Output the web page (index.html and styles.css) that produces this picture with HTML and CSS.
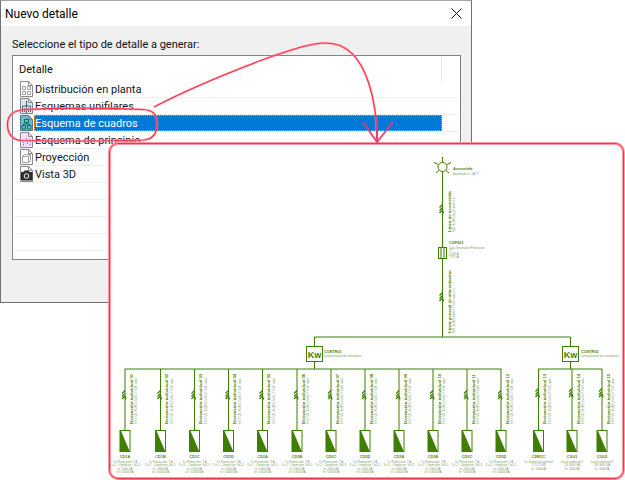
FILE: index.html
```html
<!DOCTYPE html>
<html lang="es">
<head>
<meta charset="utf-8">
<title>Nuevo detalle</title>
<link rel="stylesheet" href="styles.css">
</head>
<body>
<section class="dialog">
  <header class="titlebar">
    <span>Nuevo detalle</span>
    <svg class="close" width="11" height="11" viewBox="0 0 11 11"><path d="M.5.5l10 10M10.500.5l-10 10"/></svg>
  </header>
  <div class="dialog-body">
    <p class="prompt">Seleccione el tipo de detalle a generar:</p>
    <div class="list">
      <div class="list-head"><span>Detalle</span></div>
      <div class="row">
        <svg class="ico" viewBox="0 0 15 16"><path class="doc" d="M1.500.5h8l4 4v11h-12z"/><path class="fold" d="M9.500.5v4h4"/><path class="gr" d="M3.500 5.500h3v3h-3zM8.500 5.500h3v3h-3zM3.500 10.500h3v3h-3zM8.500 10.500h3v3h-3z"/></svg>
        <span class="name">Distribución en planta</span>
      </div>
      <div class="row">
        <svg class="ico" viewBox="0 0 15 16"><path class="doc blue" d="M1.500.5h8l4 4v11h-12z"/><path class="fold" d="M9.500.5v4h4"/><path class="ln" d="M7.500 3v12M3.500 8h8M3.500 8v6M11.500 8v6M5.500 10v4M9.500 10v4"/></svg>
        <span class="name">Esquemas unifilares</span>
      </div>
      <div class="row">
        <svg class="ico" viewBox="0 0 15 16"><path class="doc teal" d="M1.500.5h8l4 4v11h-12z"/><path class="fold" d="M9.500.5v4h4"/><path class="tl" d="M5.500 4.500h4v3h-4zM3 10.500h3.500v3.500H3zM8.500 10.500H12v3.500H8.500zM7.500 7.500v1.500M4.500 10.500V9h6v1.500"/></svg>
        <span class="name sel">Esquema de cuadros</span>
      </div>
      <div class="row">
        <svg class="ico" viewBox="0 0 15 16"><path class="doc pink" d="M1.500.5h8l4 4v11h-12z"/><path class="fold" d="M9.500.5v4h4"/><path class="dots" d="M4 10h2M7 7h2M10 8h2M4 12.500h2M8 11h2M10.500 12.500h2"/></svg>
        <span class="name">Esquema de principio</span>
      </div>
      <div class="row">
        <svg class="ico" viewBox="0 0 15 16"><path class="doc" d="M1.500.5h8l4 4v11h-12z"/><path class="fold" d="M9.500.5v4h4"/><path class="gr" d="M3.500 7.500h6v6h-6zM3.500 7.500l2-2h6v6l-2 2M9.500 7.500l2-2"/></svg>
        <span class="name">Proyección</span>
      </div>
      <div class="row">
        <svg class="ico" viewBox="0 0 15 16"><path class="doc" d="M1.500.5h8l4 4v11h-12z"/><path class="fold" d="M9.500.5v4h4"/><path class="cam" d="M2.500 6.500h2l1-1.500h4l1 1.500h2.500v7.500H2.500z"/><circle class="lens" cx="7.500" cy="10" r="2.300"/></svg>
        <span class="name">Vista 3D</span>
      </div>
      <div class="row"></div>
      <div class="row"></div>
      <div class="row"></div>
      <div class="row"></div>
    </div>
  </div>
</section>

<aside class="panel">
  <svg class="diagram" width="513" height="334" viewBox="110 144 513 334">
    <defs>
      <path id="sw" class="swm" d="M-3-1.500L0-4.500M-3 1.500L0-1.500M-3 4L0 1M0 1l1 3.500"/>
      <g id="box">
        <rect class="bx" x="-5" y="430.500" width="10" height="21"/>
        <path class="tri" d="M-5 431l1 0 9 21H-5z"/>
      </g>
    </defs>

    <path class="w" d="M442.500 157V337M314.500 337H570.500M314.500 337v9M570.500 337v9M314.500 362v7M570.500 362v7M125 369H501.500M538 369H602"/>

    <circle class="hollow" cx="442.500" cy="167" r="4.500"/>
    <path class="w" d="M434 162.500l4 2M451 162.500l-4 2M436 173l3-2.500M449 173l-3-2.500"/>
    <text class="cap" x="453" y="170">Acometida</text>
    <text class="sm" x="453" y="175">Acometida 0.. 5A TT</text>

    <use href="#sw" x="442.500" y="209"/>
    <text class="vt" transform="translate(451 232) rotate(-90)">Línea de acometida</text>
    <text class="vs" transform="translate(455 232) rotate(-90)">RZ1-K (AS) 4x16 mm² Cu</text>

    <rect class="fuse" x="438.500" y="247.500" width="8" height="11"/>
    <path class="w" d="M441 248v10M444 248v10"/>
    <text class="cap" x="449" y="244">CGP001</text>
    <text class="sm" x="449" y="249">Caja General de Protección</text>
    <text class="sm" x="449" y="252">TT</text>
    <text class="sm" x="449" y="255">C&lt;63 A</text>
    <text class="sm" x="449" y="258">*375 kA</text>

    <use href="#sw" x="442.500" y="297"/>
    <text class="vt" transform="translate(451 333) rotate(-90)">Línea general de alimentación</text>
    <text class="vs" transform="translate(455 333) rotate(-90)">RZ1-K (AS) 4x35+TTx16 mm² Cu</text>

    <rect class="kw" x="306.500" y="346.500" width="16" height="15"/>
    <text class="kwt" x="314.500" y="357.500">Kw</text>
    <text class="cap" x="324" y="353">CONTR01</text>
    <text class="sm" x="324" y="357">Centralización de contadores</text>
    <rect class="kw" x="562.500" y="346.500" width="16" height="15"/>
    <text class="kwt" x="570.500" y="357.500">Kw</text>
    <text class="cap" x="581" y="353">CONTR02</text>
    <text class="sm" x="581" y="357">Centralización de contadores</text>

    <g transform="translate(125)"><path class="w" d="M0 369v61"/><use href="#sw" y="395"/><use href="#box"/><text class="vt" transform="translate(7.500 424) rotate(-90)">Derivación individual 01</text><text class="vs" transform="translate(12 424) rotate(-90)">ES 07Z1-K (AS) 2x10+TTx10 mm²</text><text class="capm" y="458">CD1A</text><text class="smm" y="463">2 x Protección: 7 A</text><text class="smm" y="466">3 x 1 - Conductor: 3x1.5</text><text class="smm" y="470">In: 2300 VA</text><text class="smm" y="473">Ict: 1000/5VA</text></g>
    <g transform="translate(160.500)"><path class="w" d="M0 369v61"/><use href="#sw" y="395"/><use href="#box"/><text class="vt" transform="translate(7.500 424) rotate(-90)">Derivación individual 02</text><text class="vs" transform="translate(12 424) rotate(-90)">ES 07Z1-K (AS) 2x10+TTx10 mm²</text><text class="capm" y="458">CD1B</text><text class="smm" y="463">2 x Protección: 7 A</text><text class="smm" y="466">3 x 1 - Conductor: 3x1.5</text><text class="smm" y="470">In: 2300 VA</text><text class="smm" y="473">Ict: 1000/5VA</text></g>
    <g transform="translate(194.500)"><path class="w" d="M0 369v61"/><use href="#sw" y="395"/><use href="#box"/><text class="vt" transform="translate(7.500 424) rotate(-90)">Derivación individual 03</text><text class="vs" transform="translate(12 424) rotate(-90)">ES 07Z1-K (AS) 2x10+TTx10 mm²</text><text class="capm" y="458">CD1C</text><text class="smm" y="463">2 x Protección: 7 A</text><text class="smm" y="466">3 x 1 - Conductor: 3x1.5</text><text class="smm" y="470">In: 2300 VA</text><text class="smm" y="473">Ict: 1000/5VA</text></g>
    <g transform="translate(228.500)"><path class="w" d="M0 369v61"/><use href="#sw" y="395"/><use href="#box"/><text class="vt" transform="translate(7.500 424) rotate(-90)">Derivación individual 04</text><text class="vs" transform="translate(12 424) rotate(-90)">ES 07Z1-K (AS) 2x10+TTx10 mm²</text><text class="capm" y="458">CD1D</text><text class="smm" y="463">2 x Protección: 7 A</text><text class="smm" y="466">3 x 1 - Conductor: 3x1.5</text><text class="smm" y="470">In: 2300 VA</text><text class="smm" y="473">Ict: 1000/5VA</text></g>
    <g transform="translate(262.500)"><path class="w" d="M0 369v61"/><use href="#sw" y="395"/><use href="#box"/><text class="vt" transform="translate(7.500 424) rotate(-90)">Derivación individual 05</text><text class="vs" transform="translate(12 424) rotate(-90)">ES 07Z1-K (AS) 2x10+TTx10 mm²</text><text class="capm" y="458">CD2A</text><text class="smm" y="463">2 x Protección: 7 A</text><text class="smm" y="466">3 x 1 - Conductor: 3x1.5</text><text class="smm" y="470">In: 2300 VA</text><text class="smm" y="473">Ict: 1000/5VA</text></g>
    <g transform="translate(297)"><path class="w" d="M0 369v61"/><use href="#sw" y="395"/><use href="#box"/><text class="vt" transform="translate(7.500 424) rotate(-90)">Derivación individual 06</text><text class="vs" transform="translate(12 424) rotate(-90)">ES 07Z1-K (AS) 2x10+TTx10 mm²</text><text class="capm" y="458">CD2B</text><text class="smm" y="463">2 x Protección: 7 A</text><text class="smm" y="466">3 x 1 - Conductor: 3x1.5</text><text class="smm" y="470">In: 2300 VA</text><text class="smm" y="473">Ict: 1000/5VA</text></g>
    <g transform="translate(331)"><path class="w" d="M0 369v61"/><use href="#sw" y="395"/><use href="#box"/><text class="vt" transform="translate(7.500 424) rotate(-90)">Derivación individual 07</text><text class="vs" transform="translate(12 424) rotate(-90)">ES 07Z1-K (AS) 2x10+TTx10 mm²</text><text class="capm" y="458">CD2C</text><text class="smm" y="463">2 x Protección: 7 A</text><text class="smm" y="466">3 x 1 - Conductor: 3x1.5</text><text class="smm" y="470">In: 2300 VA</text><text class="smm" y="473">Ict: 1000/5VA</text></g>
    <g transform="translate(365)"><path class="w" d="M0 369v61"/><use href="#sw" y="395"/><use href="#box"/><text class="vt" transform="translate(7.500 424) rotate(-90)">Derivación individual 08</text><text class="vs" transform="translate(12 424) rotate(-90)">ES 07Z1-K (AS) 2x10+TTx10 mm²</text><text class="capm" y="458">CD2D</text><text class="smm" y="463">2 x Protección: 7 A</text><text class="smm" y="466">3 x 1 - Conductor: 3x1.5</text><text class="smm" y="470">In: 2300 VA</text><text class="smm" y="473">Ict: 1000/5VA</text></g>
    <g transform="translate(399)"><path class="w" d="M0 369v61"/><use href="#sw" y="395"/><use href="#box"/><text class="vt" transform="translate(7.500 424) rotate(-90)">Derivación individual 09</text><text class="vs" transform="translate(12 424) rotate(-90)">ES 07Z1-K (AS) 2x10+TTx10 mm²</text><text class="capm" y="458">CD3A</text><text class="smm" y="463">2 x Protección: 7 A</text><text class="smm" y="466">3 x 1 - Conductor: 3x1.5</text><text class="smm" y="470">In: 2300 VA</text><text class="smm" y="473">Ict: 1000/5VA</text></g>
    <g transform="translate(433)"><path class="w" d="M0 369v61"/><use href="#sw" y="395"/><use href="#box"/><text class="vt" transform="translate(7.500 424) rotate(-90)">Derivación individual 10</text><text class="vs" transform="translate(12 424) rotate(-90)">ES 07Z1-K (AS) 2x10+TTx10 mm²</text><text class="capm" y="458">CD3B</text><text class="smm" y="463">2 x Protección: 7 A</text><text class="smm" y="466">3 x 1 - Conductor: 3x1.5</text><text class="smm" y="470">In: 2300 VA</text><text class="smm" y="473">Ict: 1000/5VA</text></g>
    <g transform="translate(467)"><path class="w" d="M0 369v61"/><use href="#sw" y="395"/><use href="#box"/><text class="vt" transform="translate(7.500 424) rotate(-90)">Derivación individual 11</text><text class="vs" transform="translate(12 424) rotate(-90)">ES 07Z1-K (AS) 2x10+TTx10 mm²</text><text class="capm" y="458">CD3C</text><text class="smm" y="463">2 x Protección: 7 A</text><text class="smm" y="466">3 x 1 - Conductor: 3x1.5</text><text class="smm" y="470">In: 2300 VA</text><text class="smm" y="473">Ict: 1000/5VA</text></g>
    <g transform="translate(501)"><path class="w" d="M0 369v61"/><use href="#sw" y="395"/><use href="#box"/><text class="vt" transform="translate(7.500 424) rotate(-90)">Derivación individual 12</text><text class="vs" transform="translate(12 424) rotate(-90)">ES 07Z1-K (AS) 2x10+TTx10 mm²</text><text class="capm" y="458">CD3D</text><text class="smm" y="463">2 x Protección: 7 A</text><text class="smm" y="466">3 x 1 - Conductor: 3x1.5</text><text class="smm" y="470">In: 2300 VA</text><text class="smm" y="473">Ict: 1000/5VA</text></g>

    <g transform="translate(538.500)"><path class="w" d="M0 369v61"/><use href="#sw" y="393"/><use href="#box"/><text class="vt" transform="translate(7.500 424) rotate(-90)">Derivación individual 13</text><text class="vs" transform="translate(12 424) rotate(-90)">ES 07Z1-K (AS) 2x16+TTx16 mm²</text><text class="capm" y="458">CDRCC</text><text class="smm" y="463">3 x Instalación general</text><text class="smm" y="466">1* 5.75 kW</text><text class="smm" y="470">Ict: 5000VA</text></g>
    <g transform="translate(572)"><path class="w" d="M0 369v61"/><use href="#sw" y="393"/><use href="#box"/><text class="vt" transform="translate(7.500 424) rotate(-90)">Derivación individual 14</text><text class="vs" transform="translate(12 424) rotate(-90)">ES 07Z1-K (AS) 2x16+TTx16 mm²</text><text class="capm" y="458">CGU1</text><text class="smm" y="463">Local comercial 1</text><text class="smm" y="466">2.8 3000 VA</text><text class="smm" y="470">Ict: 3000VA</text></g>
    <g transform="translate(602)"><path class="w" d="M0 369v61"/><use href="#sw" y="393"/><use href="#box"/><text class="vt" transform="translate(7.500 424) rotate(-90)">Derivación individual 15</text><text class="vs" transform="translate(12 424) rotate(-90)">ES 07Z1-K (AS) 2x16+TTx16 mm²</text><text class="capm" y="458">CGU2</text><text class="smm" y="463">Local comercial 2</text><text class="smm" y="466">2.8 3000 VA</text><text class="smm" y="470">Ict: 3000VA</text></g>
  </svg>
</aside>

<svg class="callout" width="625" height="480" viewBox="0 0 625 480">
  <path class="halo" d="M26 109.500C60 108 110 108 143 109.500C152 110 157 114 157 122C157.500 133 154 139 144 140C100 141.500 50 141 22 140.500C12 140 7.500 134 7.500 124C7.500 115 14 110 26 109.500z"/>
  <path class="red" d="M26 109.500C60 108 110 108 143 109.500C152 110 157 114 157 122C157.500 133 154 139 144 140C100 141.500 50 141 22 140.500C12 140 7.500 134 7.500 124C7.500 115 14 110 26 109.500z"/>
  <path class="halo" d="M154 107C190 88 225 74 262 60C290 50 310 43 326 43C350 43 362 62 369 84C376 105 377 125 377 142"/>
  <path class="red" d="M154 107C190 88 225 74 262 60C290 50 310 43 326 43C350 43 362 62 369 84C376 105 377 125 377 142"/>
  <path class="head" d="M363 122L377 142L393 122M377 115V142"/>
</svg>
</body>
</html>
```
FILE: styles.css
```css
* { box-sizing: border-box; }
html, body { margin: 0; padding: 0; background: #fff; }
body { width: 625px; height: 480px; overflow: hidden; position: relative; font-family: Roboto, "Noto Sans", sans-serif; font-size: 11px; color: #111; }

.dialog { width: 472px; height: 303px; display: flex; flex-direction: column; border: 1px solid #6f6f6f; border-top-color: #a5a5a5; background: #f0f0f0; }
.titlebar { height: 25px; flex: none; background: #fff; display: flex; align-items: center; justify-content: space-between; padding: 0 4px 0 4px; font-size: 12px; color: #000; }
.close { margin-right: 5px; }
.close path { fill: none; stroke: #111; stroke-width: 1; }

.dialog-body { flex: 1; padding: 11px 10px 0 11px; }
.prompt { margin: 0 0 2px; height: 16px; line-height: 16px; }

.list { width: 449px; height: 205px; background: #fff; border: 1px solid #7f858c; padding: 0 1px; overflow: hidden; }
.list-head { height: 25px; width: 428px; padding: 6px 0 0 5px; border-right: 1px solid #e5e5e5; line-height: 15px; }
.row { height: 17px; display: flex; align-items: center; padding-left: 5px; border-bottom: 1px solid #f0f0f0; }
.ico { width: 15px; height: 16px; flex: none; }
.name { flex: none; width: 408px; height: 16px; line-height: 17px; padding-left: 1px; color: #0d1526; white-space: nowrap; }
.name.sel { background: #0078d7; color: #fff; outline: 1px dotted #f0a040; outline-offset: -1px; }

.doc { fill: #fff; stroke: #8a8a8a; }
.doc.blue { fill: #dce6f2; stroke: #7d8794; }
.doc.teal { fill: #74b4d6; stroke: #57778a; }
.doc.pink { fill: #f3dff2; stroke: #8a8a9a; }
.fold { fill: none; stroke: #8a8a8a; }
.gr { fill: none; stroke: #a0a0a0; }
.ln { fill: none; stroke: #4a5a78; }
.tl { fill: none; stroke: #067a58; }
.dots { fill: none; stroke: #6a78e0; stroke-width: 1.500; stroke-dasharray: 1 1; }
.cam { fill: #333; stroke: #222; }
.lens { fill: #333; stroke: #eee; }

.panel { position: absolute; left: 109px; top: 143px; width: 515px; height: 336px; background: #fff; border: 1px solid #ff3048; border-radius: 9px; box-shadow: 0 0 0 1px #ff98a4, inset 0 0 0 1px #ff98a4; overflow: hidden; }
.diagram { display: block; }
.w { fill: none; stroke: #3f7f00; stroke-width: 1; }
.hollow { fill: #fff; stroke: #3f7f00; stroke-width: 1; }
.fuse { fill: #fff; stroke: #3f7f00; stroke-width: 1; }
.swm { fill: none; stroke: #3f7f00; stroke-width: 1.300; }
.bx { fill: #fff; stroke: #3f7f00; stroke-width: 1; }
.tri { fill: #3f7f00; }
.kw { fill: #fff; stroke: #3f7f00; stroke-width: 1; }
.kwt { font: bold 9px "Liberation Sans", sans-serif; fill: #3f7f00; text-anchor: middle; }
.cap, .capm { font: bold 3.800px "Liberation Sans", sans-serif; fill: #4f8500; }
.capm { text-anchor: middle; }
.sm, .smm { font: 2.900px "Liberation Sans", sans-serif; fill: #7c9a5c; }
.smm { text-anchor: middle; }
.vt { font: bold 4.400px "Liberation Sans", sans-serif; fill: #4f8500; }
.vs { font: 3px "Liberation Sans", sans-serif; fill: #86a46a; }

.callout { position: absolute; left: 0; top: 0; pointer-events: none; }
.red { fill: none; stroke: #ff2f48; stroke-width: 1.200; }
.halo { fill: none; stroke: #ff9aa6; stroke-width: 2.400; opacity: .7; }
.head { fill: none; stroke: #f0386a; stroke-width: 2; opacity: .9; }
```
